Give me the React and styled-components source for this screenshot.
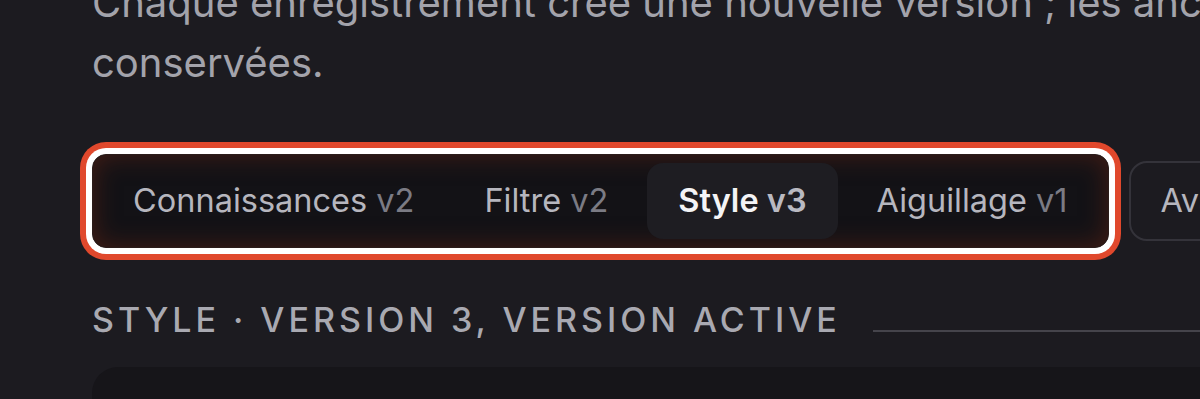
import React from "react";
import styled, { createGlobalStyle } from "styled-components";

const Global = createGlobalStyle`
  html, body {
    margin: 0;
    padding: 0;
    background: #1c1b20;
    overflow: hidden;
  }
  body {
    font-family: Inter, "Noto Sans", sans-serif;
    -webkit-font-smoothing: antialiased;
  }
`;

const Page = styled.main`
  width: 1700px;
  padding: 0 0 0 92px;
  margin-top: -27px;
  box-sizing: border-box;
`;

const Lead = styled.p`
  margin: 0;
  max-width: 1520px;
  font-size: 40px;
  line-height: 60px;
  color: #a3a3ab;
  font-weight: 400;
`;

const Toolbar = styled.div`
  display: flex;
  align-items: center;
  gap: 20px;
  margin-top: 61px;
`;

const TabList = styled.div`
  display: inline-flex;
  align-items: center;
  gap: 8px;
  padding: 8px 9px;
  border: 1px solid #2b1c1a;
  border-radius: 14px;
  background: #131216;
  box-shadow:
    inset 0 0 26px rgba(110, 38, 20, 0.55),
    0 0 0 6px #ffffff,
    0 0 0 12px #e0482c;
`;

const Tab = styled.button`
  appearance: none;
  border: none;
  margin: 0;
  padding: 14px 31px;
  border-radius: 16px;
  font-family: inherit;
  font-size: 32.5px;
  line-height: 48px;
  white-space: nowrap;
  cursor: pointer;
  background: ${(p) => (p.$active ? "#1e1d22" : "transparent")};
  color: ${(p) => (p.$active ? "#f4f4f6" : "#b6b6be")};
  font-weight: ${(p) => (p.$active ? 600 : 400)};
`;

const Ver = styled.span`
  color: ${(p) => (p.$active ? "#b9b9c1" : "#7b7b84")};
`;

const GhostButton = styled.button`
  appearance: none;
  background: transparent;
  border: 2px solid #34333a;
  border-radius: 18px;
  padding: 14px 30px;
  font-family: inherit;
  font-size: 32.5px;
  line-height: 48px;
  color: #b6b6be;
  white-space: nowrap;
`;

const SectionHead = styled.div`
  display: flex;
  align-items: center;
  gap: 32px;
  margin-top: 48px;
  width: 1108px;
`;

const SectionTitle = styled.h2`
  margin: 0;
  font-size: 34px;
  line-height: 48px;
  font-weight: 500;
  letter-spacing: 0.117em;
  text-transform: uppercase;
  color: #a9a9b1;
  white-space: nowrap;
`;

const Rule = styled.div`
  flex: 1;
  height: 2px;
  background: #45444b;
  margin-top: 22px;
`;

const Card = styled.section`
  margin-top: 23px;
  height: 200px;
  width: 1400px;
  border-radius: 26px;
  background: #161519;
`;

const tabs = [
  { name: "Connaissances", v: "v2" },
  { name: "Filtre", v: "v2" },
  { name: "Style", v: "v3", active: true },
  { name: "Aiguillage", v: "v1" },
];

export default function App() {
  return (
    <>
      <Global />
      <Page>
        <Lead>
          Chaque enregistrement crée une nouvelle version ; les anciennes sont
          conservées.
        </Lead>
        <Toolbar>
          <TabList role="tablist">
            {tabs.map((t) => (
              <Tab key={t.name} $active={t.active} role="tab">
                {t.name} <Ver $active={t.active}>{t.v}</Ver>
              </Tab>
            ))}
          </TabList>
          <GhostButton>Avancé</GhostButton>
        </Toolbar>
        <SectionHead>
          <SectionTitle>Style · version 3, version active</SectionTitle>
          <Rule />
        </SectionHead>
        <Card />
      </Page>
    </>
  );
}
